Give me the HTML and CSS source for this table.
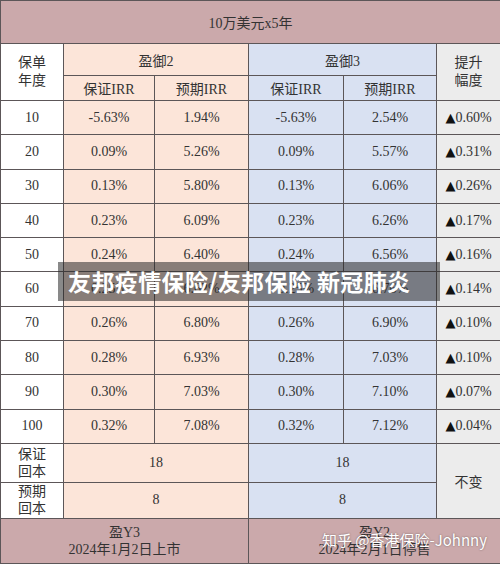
FILE: index.html
```html
<!DOCTYPE html>
<html lang="zh-CN">
<head>
    <meta charset="UTF-8">
    <meta name="viewport" content="width=device-width, initial-scale=1.0">
    <title>盈御2 vs 盈御3</title>
    <link rel="stylesheet" href="styles.css">
</head>
<body>
    <div class="page">
        <table class="irr-table">
            <colgroup>
                <col class="c-year">
                <col class="c-p1">
                <col class="c-p2">
                <col class="c-b1">
                <col class="c-b2">
                <col class="c-up">
            </colgroup>
            <tr class="row-title">
                <td colspan="6" class="title">10万美元x5年</td>
            </tr>
            <tr class="row-plan">
                <td rowspan="2" class="year two-line">保单<br>年度</td>
                <td colspan="2" class="pink">盈御2</td>
                <td colspan="2" class="blue">盈御3</td>
                <td rowspan="2" class="grey two-line">提升<br>幅度</td>
            </tr>
            <tr class="row-sub">
                <td class="pink">保证IRR</td>
                <td class="pink">预期IRR</td>
                <td class="blue">保证IRR</td>
                <td class="blue">预期IRR</td>
            </tr>
            <tr class="row-data"><td class="year">10</td><td class="pink">-5.63%</td><td class="pink">1.94%</td><td class="blue">-5.63%</td><td class="blue">2.54%</td><td class="grey"><span class="up">▲</span>0.60%</td></tr>
            <tr class="row-data"><td class="year">20</td><td class="pink">0.09%</td><td class="pink">5.26%</td><td class="blue">0.09%</td><td class="blue">5.57%</td><td class="grey"><span class="up">▲</span>0.31%</td></tr>
            <tr class="row-data"><td class="year">30</td><td class="pink">0.13%</td><td class="pink">5.80%</td><td class="blue">0.13%</td><td class="blue">6.06%</td><td class="grey"><span class="up">▲</span>0.26%</td></tr>
            <tr class="row-data"><td class="year">40</td><td class="pink">0.23%</td><td class="pink">6.09%</td><td class="blue">0.23%</td><td class="blue">6.26%</td><td class="grey"><span class="up">▲</span>0.17%</td></tr>
            <tr class="row-data"><td class="year">50</td><td class="pink">0.24%</td><td class="pink">6.40%</td><td class="blue">0.24%</td><td class="blue">6.56%</td><td class="grey"><span class="up">▲</span>0.16%</td></tr>
            <tr class="row-data"><td class="year">60</td><td class="pink">0.25%</td><td class="pink">6.62%</td><td class="blue">0.25%</td><td class="blue">6.76%</td><td class="grey"><span class="up">▲</span>0.14%</td></tr>
            <tr class="row-data"><td class="year">70</td><td class="pink">0.26%</td><td class="pink">6.80%</td><td class="blue">0.26%</td><td class="blue">6.90%</td><td class="grey"><span class="up">▲</span>0.10%</td></tr>
            <tr class="row-data"><td class="year">80</td><td class="pink">0.28%</td><td class="pink">6.93%</td><td class="blue">0.28%</td><td class="blue">7.03%</td><td class="grey"><span class="up">▲</span>0.10%</td></tr>
            <tr class="row-data"><td class="year">90</td><td class="pink">0.30%</td><td class="pink">7.03%</td><td class="blue">0.30%</td><td class="blue">7.10%</td><td class="grey"><span class="up">▲</span>0.07%</td></tr>
            <tr class="row-data"><td class="year">100</td><td class="pink">0.32%</td><td class="pink">7.08%</td><td class="blue">0.32%</td><td class="blue">7.12%</td><td class="grey"><span class="up">▲</span>0.04%</td></tr>
            <tr class="row-payback1">
                <td class="year two-line">保证<br>回本</td>
                <td colspan="2" class="pink">18</td>
                <td colspan="2" class="blue">18</td>
                <td rowspan="2" class="grey">不变</td>
            </tr>
            <tr class="row-payback2">
                <td class="year two-line">预期<br>回本</td>
                <td colspan="2" class="pink">8</td>
                <td colspan="2" class="blue">8</td>
            </tr>
            <tr class="row-foot">
                <td colspan="3" class="title two-line">盈Y3<br>2024年1月2日上市</td>
                <td colspan="3" class="title two-line">盈Y2<br>2024年2月1日停售</td>
            </tr>
        </table>

        <div class="banner">友邦疫情保险/友邦保险 新冠肺炎</div>
        <div class="watermark">知乎 @香港保险-Johnny</div>
    </div>
</body>
</html>
```

FILE: styles.css
```css
* {
    margin: 0;
    padding: 0;
    box-sizing: border-box;
}

body {
    font-family: 'Liberation Serif', 'Noto Sans CJK SC', serif;
    background: #ffffff;
    color: #333;
}

.page {
    position: relative;
    width: 500px;
    height: 564px;
    overflow: hidden;
}

.irr-table {
    width: 500px;
    border-collapse: collapse;
    table-layout: fixed;
    font-size: 14px;
}

.c-year { width: 63px; }
.c-p1 { width: 91px; }
.c-p2 { width: 94px; }
.c-b1 { width: 95px; }
.c-b2 { width: 93px; }
.c-up { width: 64px; }

.irr-table td {
    border: 1px solid #5c5658;
    text-align: center;
    vertical-align: middle;
    padding: 0;
    white-space: nowrap;
}

.row-title { height: 43px; }
.row-plan { height: 32px; }
.row-sub { height: 25px; }
.row-data { height: 34.3px; }
.row-payback1 { height: 39px; }
.row-payback2 { height: 36px; }
.row-foot { height: 45px; }

.title {
    background: #cba9ab;
}

.year {
    background: #ffffff;
}

.pink {
    background: #fce5d9;
}

.blue {
    background: #d9e1f2;
}

.grey {
    background: #ececec;
}

.up {
    font-family: 'DejaVu Sans', sans-serif;
    font-size: 13px;
    color: #111;
}

.two-line {
    line-height: 18px;
}

.row-foot .two-line,
.row-payback1 .two-line,
.row-payback2 .two-line {
    line-height: 17px;
}

/* overlay caption */
.banner {
    position: absolute;
    left: 58px;
    top: 262px;
    width: 382px;
    height: 39px;
    padding-left: 10px;
    background: rgba(40, 40, 40, 0.55);
    color: #ffffff;
    font-family: 'Noto Sans CJK SC', sans-serif;
    font-weight: bold;
    font-size: 23px;
    letter-spacing: 0.4px;
    line-height: 39px;
    white-space: nowrap;
}

.watermark {
    position: absolute;
    right: 13px;
    top: 530px;
    color: #ffffff;
    font-family: 'Noto Sans CJK SC', sans-serif;
    font-size: 15px;
    line-height: 20px;
    text-shadow: 0 0 2px rgba(0, 0, 0, 0.45);
    white-space: nowrap;
}
```
